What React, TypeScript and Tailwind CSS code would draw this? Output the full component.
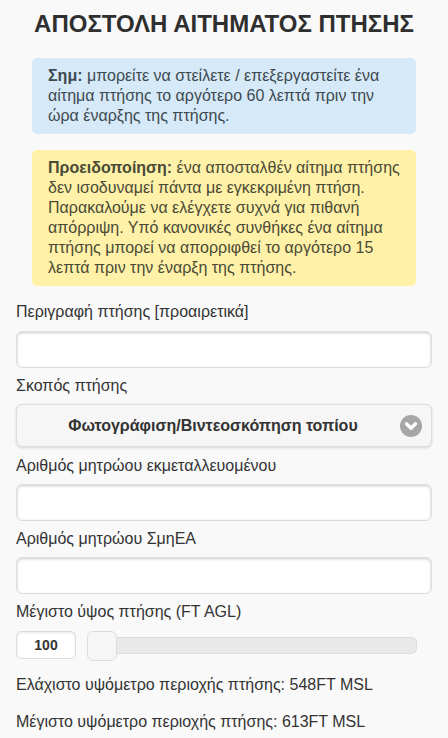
import { ChevronDown } from 'lucide-react';

const font = "font-['Liberation_Sans',Arial,sans-serif]";

const TextField = ({ label, first }: { label: string; first?: boolean }) => (
  <div>
    <label className="block h-[20px] leading-[20px] text-[16px] text-[#333]">{label}</label>
    <input
      type="text"
      className={`${first ? 'mt-[9px]' : 'mt-[8px]'} block h-[37px] w-full rounded-[6px] border border-[#ddd] bg-white shadow-[inset_0_1px_3px_rgba(0,0,0,0.2)]`}
    />
  </div>
);

const App = () => {
  return (
    <div className={`${font} h-[738px] w-[448px] overflow-hidden bg-[#f9f9f9] px-4 text-[#333]`}>
      <h1 className="pt-[10px] text-center text-[24px] leading-[28px] font-bold text-[#2f2f2f]">
        ΑΠΟΣΤΟΛΗ ΑΙΤΗΜΑΤΟΣ ΠΤΗΣΗΣ
      </h1>

      {/* Notes */}
      <div className="mx-4 mt-[20px] rounded-[5px] bg-[#d6e9f8] py-[8px] pr-4 pl-4 text-[16px] leading-[20px] text-[#3d4a50]">
        <b>Σημ:</b> μπορείτε να στείλετε / επεξεργαστείτε ένα αίτημα πτήσης το αργότερο 60 λεπτά πριν την ώρα έναρξης της πτήσης.
      </div>
      <div className="mx-4 mt-[16px] rounded-[5px] bg-[#fff1a8] py-[8px] pr-3 pl-4 text-[16px] leading-[20px] text-[#4a4a36]">
        <b>Προειδοποίηση:</b> ένα αποσταλθέν αίτημα πτήσης δεν ισοδυναμεί πάντα με εγκεκριμένη πτήση. Παρακαλούμε να ελέγχετε συχνά για πιθανή απόρριψη. Υπό κανονικές συνθήκες ένα αίτημα πτήσης μπορεί να απορριφθεί το αργότερο 15 λεπτά πριν την έναρξη της πτήσης.
      </div>

      {/* Form */}
      <div className="mt-[16px]">
        <TextField label="Περιγραφή πτήσης [προαιρετικά]" first />

        <label className="mt-[8px] block h-[20px] text-[16px] leading-[20px]">Σκοπός πτήσης</label>
        <div className="relative mt-[8px] flex h-[43px] items-center justify-center rounded-[6px] border border-[#ddd] bg-[#f6f6f6] pr-[22px] text-[16px] font-bold shadow-[0_1px_3px_rgba(0,0,0,0.15)]">
          Φωτογράφιση/Βιντεοσκόπηση τοπίου
          <span className="absolute top-[10px] right-[9px] flex h-[22px] w-[22px] items-center justify-center rounded-full bg-[#a6a6a6]">
            <ChevronDown className="h-[18px] w-[18px] text-white" strokeWidth={4.5} />
          </span>
        </div>

        <div className="mt-[9px]">
          <TextField label="Αριθμός μητρώου εκμεταλλευομένου" />
        </div>
        <div className="mt-[8px]">
          <TextField label="Αριθμός μητρώου ΣμηΕΑ" />
        </div>

        <label className="mt-[8px] block h-[20px] text-[16px] leading-[20px]">Μέγιστο ύψος πτήσης (FT AGL)</label>
        <div className="mt-[8px] flex h-[30px] items-center">
          <div className="flex h-[28px] w-[60px] items-center justify-center rounded-[5px] border border-[#ddd] bg-white text-[14px] font-bold shadow-[inset_0_1px_3px_rgba(0,0,0,0.1)]">
            100
          </div>
          <div className="relative ml-[11px] h-[17px] w-[330px] rounded-[5px] border border-[#ddd] bg-[#e9e9e9]">
            <span className="absolute top-[-7px] left-[-1px] h-[30px] w-[30px] rounded-[6px] border border-[#ddd] bg-[#f6f6f6]" />
          </div>
        </div>

        <p className="mt-[15px] text-[16px] leading-[20px]">Ελάχιστο υψόμετρο περιοχής πτήσης: 548FT MSL</p>
        <p className="mt-[17px] text-[16px] leading-[20px]">Μέγιστο υψόμετρο περιοχής πτήσης: 613FT MSL</p>
      </div>
    </div>
  );
};

export default App;
